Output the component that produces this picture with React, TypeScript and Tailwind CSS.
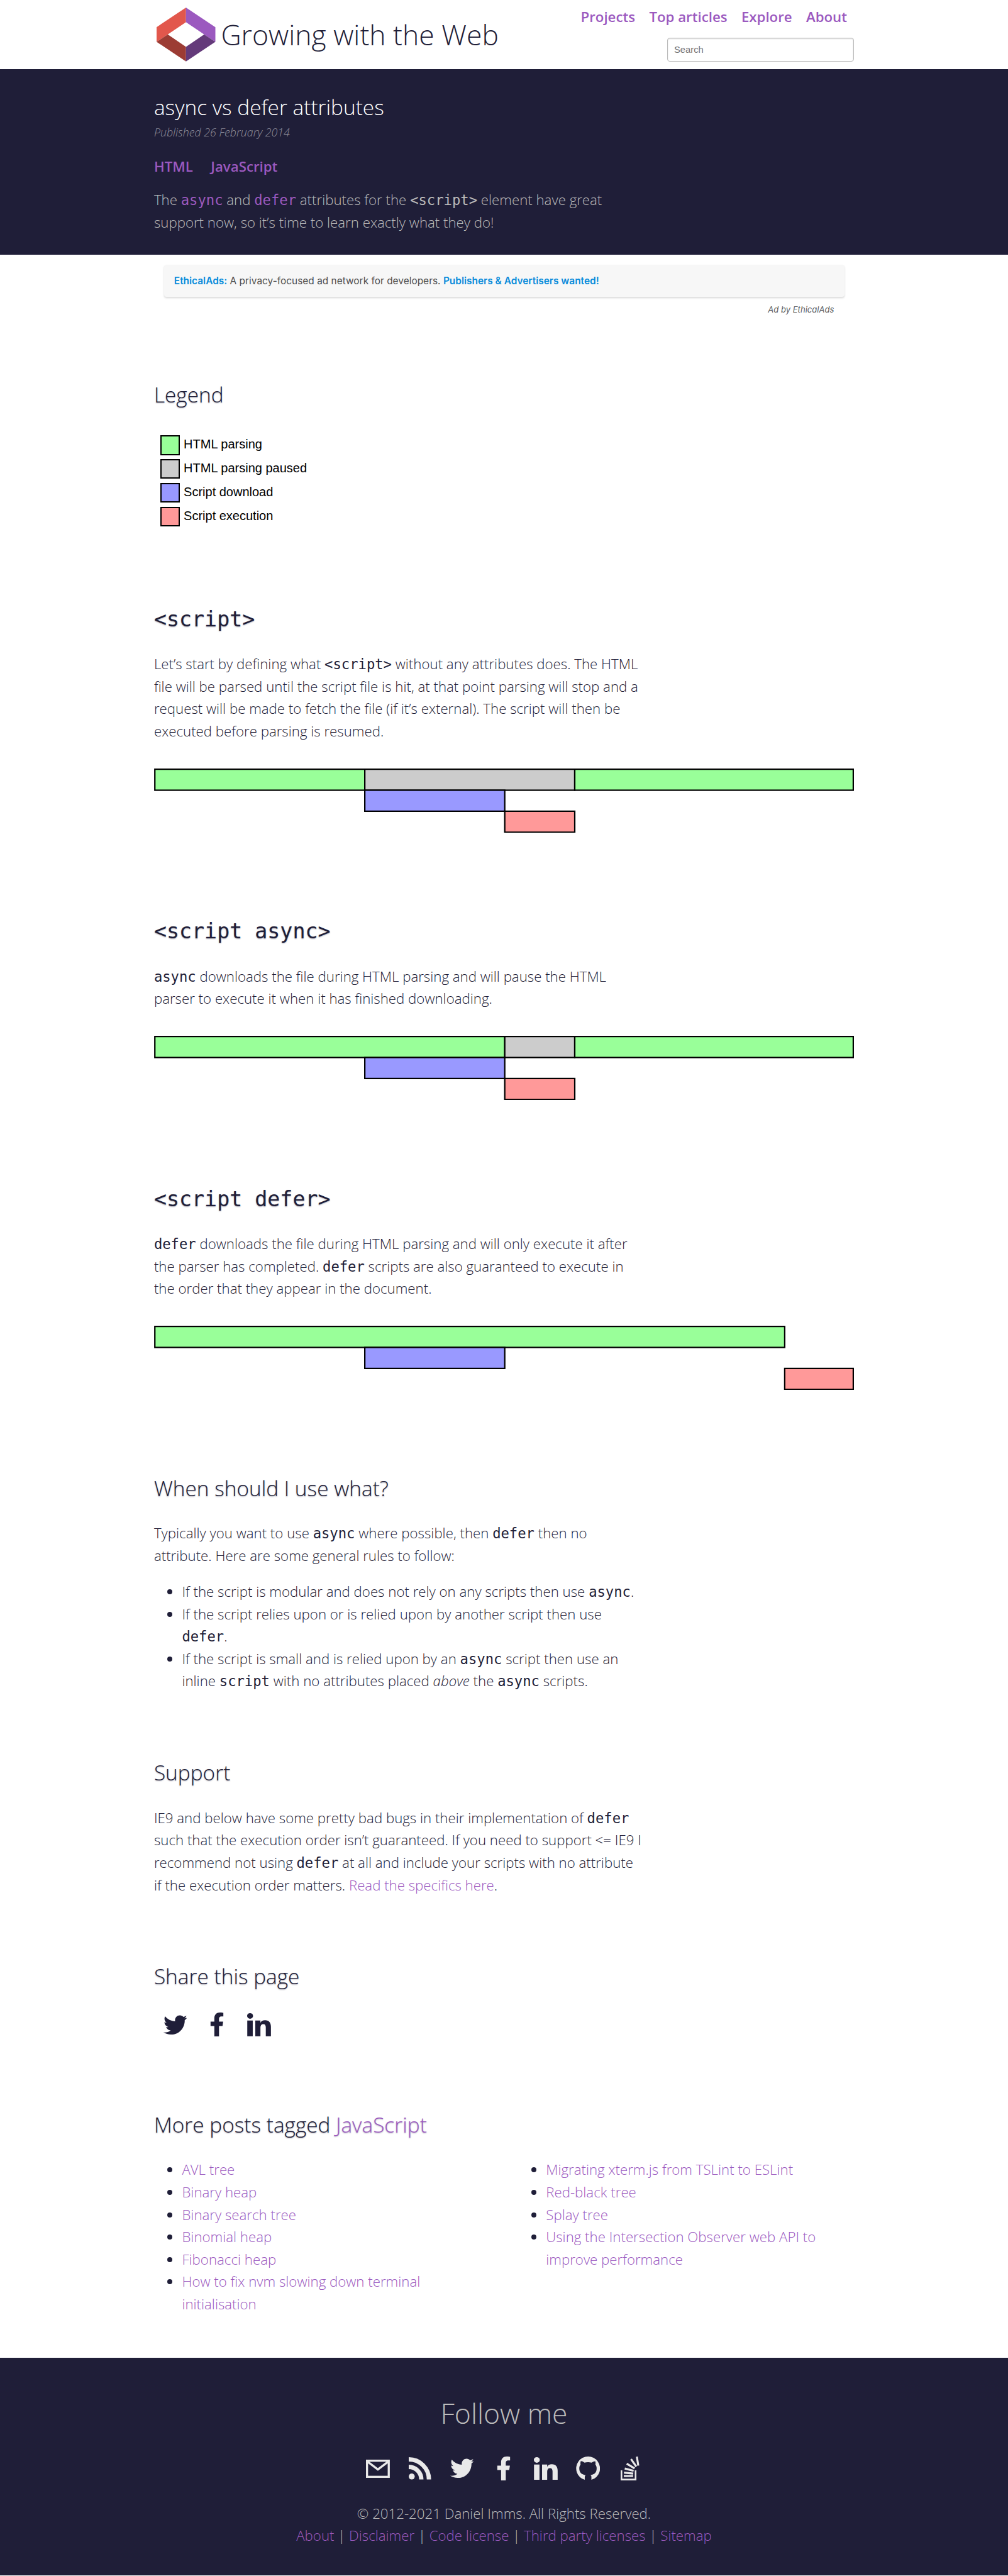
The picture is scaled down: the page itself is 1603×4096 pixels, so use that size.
import React from "react";
import { FaTwitter, FaFacebookF, FaLinkedinIn } from "react-icons/fa";

const Code = ({ children, className = "" }: { children: React.ReactNode; className?: string }) => (
  <code className={`font-['DejaVu_Sans_Mono',monospace] font-normal leading-none text-[22.2px] ${className}`}>{children}</code>
);

const H2 = ({ children, className }: { children: React.ReactNode; className: string }) => (
  <h2
    className={`h-[44.5px] whitespace-nowrap text-[33.4px] leading-[44.5px] font-light [text-shadow:0_1px_2px_rgba(30,30,56,0.35)] ${className}`}
  >
    {children}
  </h2>
);

const CodeTitle = ({ children }: { children: React.ReactNode }) => (
  <code className="font-['DejaVu_Sans_Mono',monospace] text-[33.3px] leading-none">{children}</code>
);

const P = ({ children, className }: { children: React.ReactNode; className: string }) => (
  <p className={`whitespace-nowrap leading-[35.62px] ${className}`}>{children}</p>
);

const A = ({ children }: { children: React.ReactNode }) => (
  <a href="#" className="text-[#9b59bf]">
    {children}
  </a>
);

const legend = [
  { color: "bg-[#99ff99]", label: "HTML parsing" },
  { color: "bg-[#cccccc]", label: "HTML parsing paused" },
  { color: "bg-[#9999ff]", label: "Script download" },
  { color: "bg-[#ff9999]", label: "Script execution" },
];

type Bar = [x: number, y: number, width: number, fill: string];
const GREEN = "#99ff99";
const GRAY = "#cccccc";
const BLUE = "#9999ff";
const RED = "#ff9999";

const Timeline = ({ bars }: { bars: Bar[] }) => (
  <svg viewBox="0 0 1000 92" className="mt-[40.9px] block h-[102.4px] w-full">
    {bars.map(([x, y, w, fill]) => (
      <rect key={`${x}-${y}`} x={x + 1} y={y + 1} width={w - 2} height={30} fill={fill} stroke="#000" strokeWidth={2} />
    ))}
  </svg>
);

const Slot = ({ children }: { children: React.ReactNode }) => (
  <a href="#" className="flex h-[44.5px] w-[66.8px] items-center justify-center">
    {children}
  </a>
);

const Twitter = () => <FaTwitter className="h-[37.6px] w-[37.6px]" />;
const Facebook = () => <FaFacebookF className="h-[38px] w-[38px]" />;
const LinkedIn = () => (
  <svg viewBox="78 57 204 198" className="h-[36.7px] w-[37.9px]" fill="currentColor">
    <ellipse cx={103} cy={81} rx={25.5} ry={24} />
    <path d="M79 121H126V255H79ZM148 121H192V140C199 126 212 118 232 118C265 118 282 140 282 174V255H238V180C238 162 231 152 216 152C200 152 192 163 192 181V255H148Z" />
  </svg>
);

const Mail = () => (
  <svg viewBox="0 0 68 52" className="h-[29px] w-[37.9px]" fill="none" stroke="currentColor" strokeWidth={6}>
    <rect x={3} y={3} width={62} height={46} />
    <path d="M5 6L34 28L63 6" />
  </svg>
);

const Rss = () => (
  <svg viewBox="0 0 64 64" className="h-[35.6px] w-[35.6px]" fill="none" stroke="currentColor" strokeWidth={12.4}>
    <path d="M0 6.2A57.8 57.8 0 0 1 57.8 64M0 28A36 36 0 0 1 36 64" />
    <circle cx={8.6} cy={55.4} r={8.6} fill="currentColor" stroke="none" />
  </svg>
);

const GitHub = () => (
  <svg viewBox="438 54 204 201" className="h-[37.3px] w-[37.9px]" fill="currentColor">
    <path d="M513 254A102 102 0 1 1 570 254V226Q569 217 561 213C592 209 615 194 615 156C615 142 611 131 604 124Q607 109 603 94Q590 94 571 106Q540 100 511 106Q492 93 479 93Q474 108 477 124C470 133 466 142 466 156C466 194 490 209 521 213Q513 219 513 230Z" />
  </svg>
);

const StackOverflow = () => (
  <svg viewBox="819 54 161 204" className="h-[37.9px] w-[29.9px]" fill="none" stroke="currentColor" strokeWidth={17}>
    <path strokeWidth={14} d="M826 173V251H947V173" />
    <path d="M846 221H926M847 192L927 200M854 157L930 176M871 115L938 156M908 76L953 140M958 55L970 132" />
  </svg>
);

export default function App() {
  return (
    <div className="min-h-[4096px] w-full bg-white font-['Open_Sans',sans-serif] text-[22.26px] font-light text-[#1f1e38]">
      <header className="mx-auto flex h-[110.2px] w-[1113.2px] justify-between">
        <a href="#" className="flex items-center">
          <svg viewBox="0 0 168 154" className="ml-[4.5px] h-[85.7px] w-[93.5px]">
            <path d="M84 0V42L32 77L0 98V56Z" fill="#e2574c" />
            <path d="M84 0V42L136 77L168 98V56Z" fill="#9b59bf" />
            <path d="M84 154V112.500L32 77L0 98Z" fill="#9c3c34" />
            <path d="M84 154V112.500L136 77L168 98Z" fill="#643a7a" />
          </svg>
          <span className="ml-[8.5px] whitespace-nowrap text-[44.5px] leading-[60px]">Growing with the Web</span>
        </a>
        <div className="flex flex-col items-end pt-[9.2px]">
          <nav className="flex gap-[22.3px] pr-[11.100px] font-semibold leading-[35.62px] text-[#9b59bf]">
            <a href="#">Projects</a>
            <a href="#">Top articles</a>
            <a href="#">Explore</a>
            <a href="#">About</a>
          </nav>
          <input
            placeholder="Search"
            className="mt-[15.3px] h-[37.9px] w-[297.2px] rounded-[4px] border border-[#bbbbbb] px-[10px] font-['Liberation_Sans',sans-serif] text-[14.8px] font-normal shadow-[inset_0_1px_2px_rgba(0,0,0,0.15)] placeholder:text-[#757575]"
          />
        </div>
      </header>

      <section className="h-[295px] bg-[#1f1e38] pt-[37.7px] text-[#bbbbbb]">
        <div className="mx-auto w-[1113.2px]">
          <h1 className="text-[33.4px] leading-[44.5px] text-white">async vs defer attributes</h1>
          <p className="mt-[5px] text-[17.8px] leading-[26.7px] text-[#8f8e9b] italic">Published 26 February 2014</p>
          <div className="mt-[22.8px] flex gap-[28.5px] font-semibold leading-[35.62px] text-[#9b59bf]">
            <a href="#">HTML</a>
            <a href="#">JavaScript</a>
          </div>
          <P className="mt-[17.8px]">
            The <Code className="text-[#9b59bf]">async</Code> and <Code className="text-[#9b59bf]">defer</Code> attributes for the{" "}
            <Code>&lt;script&gt;</Code> element have great
            <br />
            support now, so it’s time to learn exactly what they do!
          </P>
        </div>
      </section>

      <main className="mx-auto w-[1113.2px]">
        <aside className="h-[200.2px] px-[15.6px] pt-[15.6px] font-['Inter',sans-serif]">
          <div className="flex h-[51.2px] items-center rounded-[4px] bg-[#f7f7f7] px-[16.300px] text-[15.45px] font-normal whitespace-pre text-[#505050] shadow-[0_2px_3px_rgba(0,0,0,0.15)]">
            <span>
              <b className="font-semibold text-[#088cdb]">EthicalAds:</b> A privacy-focused ad network for developers.{" "}
              <b className="font-semibold text-[#088cdb]">Publishers &amp; Advertisers wanted!</b>
            </span>
          </div>
          <p className="mt-[10px] pr-[16px] text-right text-[13.1px] leading-[20px] font-normal text-[#606060] italic">Ad by EthicalAds</p>
        </aside>

        <H2 className="">Legend</H2>
        <ul className="mt-[42.5px] ml-[10px] flex flex-col gap-[6.7px] font-['Liberation_Sans',sans-serif] text-[20px] font-normal text-black">
          {legend.map(({ color, label }) => (
            <li key={label} className="flex h-[31.17px] items-center">
              <span className={`h-[31.17px] w-[31.17px] border-2 border-black ${color}`} />
              <span className="ml-[6px] -mt-[3px] leading-none">{label}</span>
            </li>
          ))}
        </ul>

        <H2 className="mt-[123.9px]">
          <CodeTitle>&lt;script&gt;</CodeTitle>
        </H2>
        <P className="mt-[32.7px]">
          Let’s start by defining what <Code>&lt;script&gt;</Code> without any attributes does. The HTML
          <br />
          file will be parsed until the script file is hit, at that point parsing will stop and a
          <br />
          request will be made to fetch the file (if it’s external). The script will then be
          <br />
          executed before parsing is resumed.
        </P>
        <Timeline
          bars={[
            [0, 0, 302, GREEN],
            [300, 0, 302, GRAY],
            [600, 0, 400, GREEN],
            [300, 30, 202, BLUE],
            [500, 60, 102, RED],
          ]}
        />

        <H2 className="mt-[133.4px]">
          <CodeTitle>&lt;script async&gt;</CodeTitle>
        </H2>
        <P className="mt-[32.7px]">
          <Code>async</Code> downloads the file during HTML parsing and will pause the HTML
          <br />
          parser to execute it when it has finished downloading.
        </P>
        <Timeline
          bars={[
            [0, 0, 502, GREEN],
            [500, 0, 102, GRAY],
            [600, 0, 400, GREEN],
            [300, 30, 202, BLUE],
            [500, 60, 102, RED],
          ]}
        />

        <H2 className="mt-[134px]">
          <CodeTitle>&lt;script defer&gt;</CodeTitle>
        </H2>
        <P className="mt-[32.7px]">
          <Code>defer</Code> downloads the file during HTML parsing and will only execute it after
          <br />
          the parser has completed. <Code>defer</Code> scripts are also guaranteed to execute in
          <br />
          the order that they appear in the document.
        </P>
        <Timeline
          bars={[
            [0, 0, 902, GREEN],
            [300, 30, 202, BLUE],
            [900, 60, 100, RED],
          ]}
        />

        <H2 className="mt-[134px]">When should I use what?</H2>
        <P className="mt-[31.6px]">
          Typically you want to use <Code>async</Code> where possible, then <Code>defer</Code> then no
          <br />
          attribute. Here are some general rules to follow:
        </P>
        <ul className="mt-[21.2px] list-disc pl-[44.5px] leading-[35.62px] whitespace-nowrap">
          <li>
            If the script is modular and does not rely on any scripts then use <Code>async</Code>.
          </li>
          <li>
            If the script relies upon or is relied upon by another script then use
            <br />
            <Code>defer</Code>.
          </li>
          <li>
            If the script is small and is relied upon by an <Code>async</Code> script then use an
            <br />
            inline <Code>script</Code> with no attributes placed <em>above</em> the <Code>async</Code> scripts.
          </li>
        </ul>

        <H2 className="mt-[105.3px]">Support</H2>
        <P className="mt-[31.900px]">
          IE9 and below have some pretty bad bugs in their implementation of <Code>defer</Code>
          <br />
          such that the execution order isn’t guaranteed. If you need to support &lt;= IE9 I
          <br />
          recommend not using <Code>defer</Code> at all and include your scripts with no attribute
          <br />
          if the execution order matters. <A>Read the specifics here</A>.
        </P>

        <H2 className="mt-[104.5px]">Share this page</H2>
        <div className="mt-[33px] flex">
          <Slot>
            <Twitter />
          </Slot>
          <Slot>
            <Facebook />
          </Slot>
          <Slot>
            <LinkedIn />
          </Slot>
        </div>

        <H2 className="mt-[113.9px]">
          More posts tagged <A>JavaScript</A>
        </H2>
        <div className="mt-[32.2px] grid grid-cols-2 gap-[44.5px] leading-[35.62px] whitespace-nowrap">
          <ul className="list-disc pl-[44.5px]">
            <li><A>AVL tree</A></li>
            <li><A>Binary heap</A></li>
            <li><A>Binary search tree</A></li>
            <li><A>Binomial heap</A></li>
            <li><A>Fibonacci heap</A></li>
            <li><A>How to fix nvm slowing down terminal<br />initialisation</A></li>
          </ul>
          <ul className="list-disc pl-[44.5px]">
            <li><A>Migrating xterm.js from TSLint to ESLint</A></li>
            <li><A>Red-black tree</A></li>
            <li><A>Splay tree</A></li>
            <li><A>Using the Intersection Observer web API to<br />improve performance</A></li>
          </ul>
        </div>
      </main>

      <footer className="mt-[67.6px] h-[346.2px] bg-[#1f1e38] pt-[57.3px] text-center text-[#bbbbbb]">
        <h2 className="text-[44.5px] leading-[60px]">Follow me</h2>
        <div className="mt-[36.2px] flex justify-center text-[#e9e9e9]">
          <Slot><Mail /></Slot>
          <Slot><Rss /></Slot>
          <Slot><Twitter /></Slot>
          <Slot><Facebook /></Slot>
          <Slot><LinkedIn /></Slot>
          <Slot><GitHub /></Slot>
          <Slot><StackOverflow /></Slot>
        </div>
        <P className="mt-[31.5px]">
          © 2012-2021 Daniel Imms. All Rights Reserved.
          <br />
          <A>About</A> | <A>Disclaimer</A> | <A>Code license</A> | <A>Third party licenses</A> | <A>Sitemap</A>
        </P>
      </footer>
    </div>
  );
}
